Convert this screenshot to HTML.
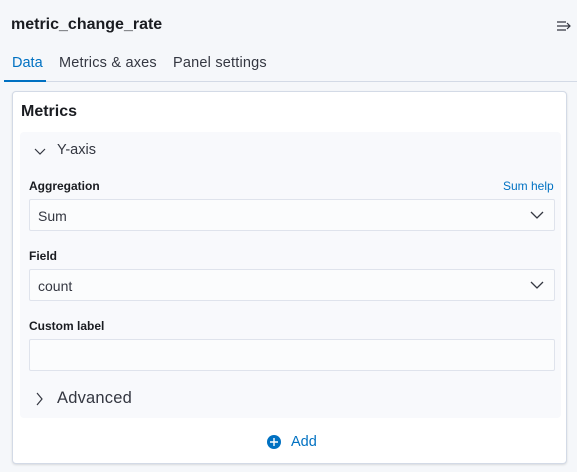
<!DOCTYPE html><html><head><style>
*{box-sizing:border-box;margin:0;padding:0}
body{width:577px;height:472px;background:#f5f7fa;font-family:"Liberation Sans",sans-serif;color:#1a1c21;position:relative;overflow:hidden}
.a{position:absolute}
.lbl{font-size:12px;font-weight:bold;color:#1a1c21}
.box{position:absolute;left:29px;width:526px;height:32px;background:#fbfcfd;border:1px solid #dfe3ec;border-radius:2px;font-size:14px;padding:8px 8px;color:#343741}
.chev{position:absolute;right:10px;top:9px}
</style></head><body>
<div class="a" style="left:11px;top:16px;font-size:16px;font-weight:bold">metric_change_rate</div>
<svg class="a" style="left:556px;top:19px" width="16" height="14" viewBox="0 0 16 14"><path d="M1 3h9M1 7h13M11 4l3 3-3 3M1 11h9" stroke="#343741" fill="none" stroke-width="1.2"/></svg>
<div class="a" style="left:12px;top:55px;font-size:14.5px;color:#0071c2">Data</div>
<div class="a" style="left:59px;top:55px;font-size:14.5px;color:#343741;letter-spacing:0.2px">Metrics &amp; axes</div>
<div class="a" style="left:173px;top:55px;font-size:14.5px;color:#343741;letter-spacing:0.2px">Panel settings</div>
<div class="a" style="left:4px;top:81px;width:573px;height:1px;background:#d3dae6"></div>
<div class="a" style="left:4px;top:80px;width:42px;height:2px;background:#0071c2"></div>
<div class="a" style="left:12px;top:91px;width:555px;height:373px;background:#fff;border:1px solid #d3dae6;border-radius:4px;box-shadow:0 1px 2px rgba(0,0,0,.12)"></div>
<div class="a" style="left:21px;top:103px;font-size:16px;font-weight:bold">Metrics</div>
<div class="a" style="left:20px;top:132px;width:541px;height:286px;background:#f8f9fc;border-radius:4px"></div>
<svg class="a" style="left:34px;top:146px" width="12" height="10"><path d="M1 3l5 5 5-5" stroke="#343741" fill="none" stroke-width="1.2"/></svg>
<div class="a" style="left:57px;top:142px;font-size:14.5px;color:#343741">Y-axis</div>
<div class="a lbl" style="left:29px;top:179px">Aggregation</div>
<div class="a" style="left:503px;top:179px;font-size:12px;color:#0071c2">Sum help</div>
<div class="box" style="top:199px">Sum<svg class="chev" width="14" height="12"><path d="M1 3l6 6 6-6" stroke="#343741" fill="none" stroke-width="1.3"/></svg></div>
<div class="a lbl" style="left:29px;top:249px">Field</div>
<div class="box" style="top:269px">count<svg class="chev" width="14" height="12"><path d="M1 3l6 6 6-6" stroke="#343741" fill="none" stroke-width="1.3"/></svg></div>
<div class="a lbl" style="left:29px;top:319px">Custom label</div>
<div class="box" style="top:339px"></div>
<svg class="a" style="left:34px;top:392px" width="10" height="14"><path d="M3 1l5 6-5 6" stroke="#343741" fill="none" stroke-width="1.2"/></svg>
<div class="a" style="left:57px;top:389px;font-size:16.5px;color:#343741;letter-spacing:0.2px">Advanced</div>
<svg class="a" style="left:266px;top:434px" width="16" height="16"><circle cx="8" cy="8" r="7" fill="#0071c2"/><path d="M8 4v8M4 8h8" stroke="#fff" stroke-width="1.4"/></svg>
<div class="a" style="left:291px;top:434px;font-size:14.5px;color:#0071c2">Add</div>
</body></html>
